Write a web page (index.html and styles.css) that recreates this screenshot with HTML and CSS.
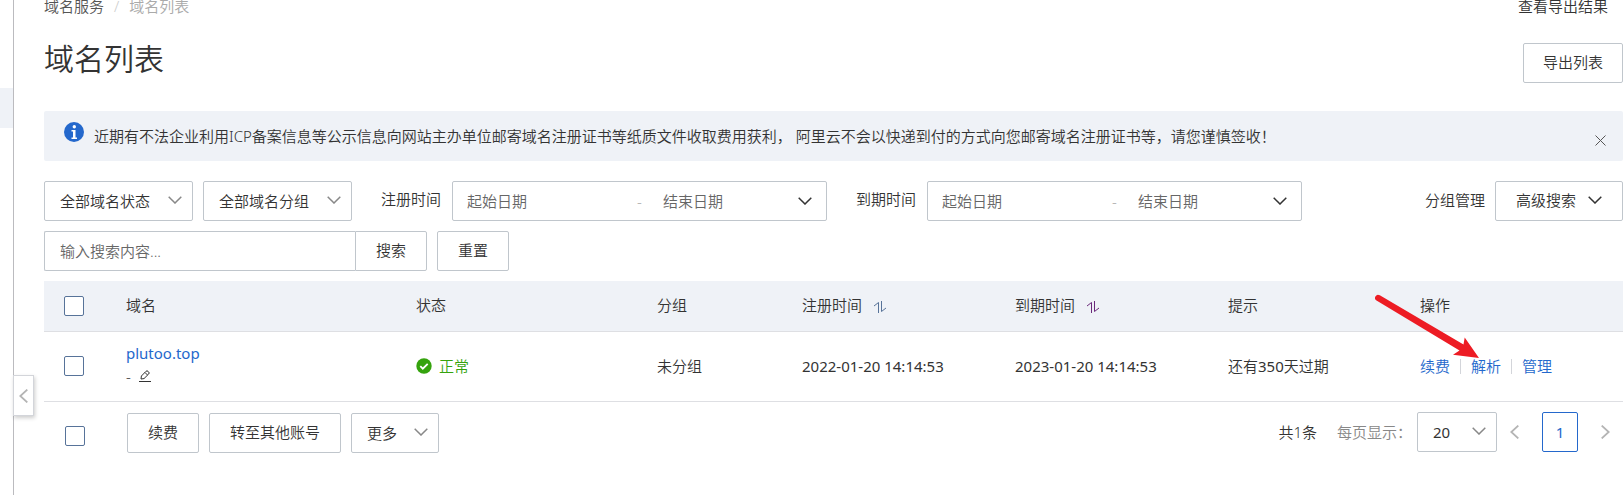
FILE: index.html
```html
<!DOCTYPE html>
<html lang="zh-CN">
<head>
<meta charset="utf-8">
<title>域名列表</title>
<meta name="viewport" content="width=device-width, initial-scale=1">
<link rel="stylesheet" href="styles.css">
</head>
<body>
<svg class="sprite" aria-hidden="true">
  <symbol id="chevron" viewBox="0 0 14 8"><path d="M.7.7 7 7 13.3.7" fill="none" stroke="currentColor" stroke-width="1.5"/></symbol>
  <symbol id="prev" viewBox="0 0 9 14"><path d="M8.3.6 1.3 7l7 6.4" fill="none" stroke="currentColor" stroke-width="1.8"/></symbol>
  <symbol id="next" viewBox="0 0 9 14"><path d="M.7.6 7.7 7l-7 6.4" fill="none" stroke="currentColor" stroke-width="1.8"/></symbol>
  <symbol id="sort" viewBox="0 0 12 12"><path d="M0 5 4.500 1.500V12M7.500 0v10.500L12 7" fill="none" stroke="currentColor" stroke-width="1"/></symbol>
</svg>
<div class="layout">
  <aside class="sidebar">
    <div class="sidebar-active"></div>
    <button class="collapse" type="button" aria-label="收起侧栏"><svg class="icon-collapse"><use href="#prev"/></svg></button>
  </aside>
  <main class="main">
    <div class="topline">
      <nav class="breadcrumb"><a href="#">域名服务</a><span class="slash">/</span><span class="current">域名列表</span></nav>
      <a class="plain-link" href="#">查看导出结果</a>
    </div>
    <header class="heading">
      <h1>域名列表</h1>
      <button class="btn" type="button">导出列表</button>
    </header>
    <div class="notice">
      <svg class="icon-info" viewBox="0 0 20 20"><circle cx="10" cy="10" r="10" fill="#2468cc"/><circle cx="10.300" cy="4.700" r="1.700" fill="#fff"/><path d="M7.500 8h4v7.500H13V17H7.500v-1.500H9v-6H7.500z" fill="#fff"/></svg>
      <p>近期有不法企业利用ICP备案信息等公示信息向网站主办单位邮寄域名注册证书等纸质文件收取费用获利， 阿里云不会以快递到付的方式向您邮寄域名注册证书等，请您谨慎签收！</p>
      <button class="close" type="button" aria-label="关闭"><svg viewBox="0 0 11 11"><path d="m.5.5 10 10m0-10-10 10" stroke="currentColor" stroke-width="1"/></svg></button>
    </div>
    <form class="filters">
      <div class="filter-row">
        <div class="select"><select aria-label="域名状态"><option>全部域名状态</option></select><svg class="chevron"><use href="#chevron"/></svg></div>
        <div class="select"><select aria-label="域名分组"><option>全部域名分组</option></select><svg class="chevron"><use href="#chevron"/></svg></div>
        <label class="range-label" for="reg-start">注册时间</label>
        <div class="range"><input class="range-start" id="reg-start" type="text" placeholder="起始日期"><span class="dash">-</span><input type="text" placeholder="结束日期" aria-label="注册时间结束日期"><svg class="chevron"><use href="#chevron"/></svg></div>
        <label class="range-label" for="exp-start">到期时间</label>
        <div class="range"><input class="range-start" id="exp-start" type="text" placeholder="起始日期"><span class="dash">-</span><input type="text" placeholder="结束日期" aria-label="到期时间结束日期"><svg class="chevron"><use href="#chevron"/></svg></div>
        <a class="plain-link groups" href="#">分组管理</a>
        <button class="btn" type="button">高级搜索<svg class="chevron"><use href="#chevron"/></svg></button>
      </div>
      <div class="filter-row">
        <div class="search"><input type="text" placeholder="输入搜索内容..." aria-label="搜索内容"><button class="btn" type="button">搜索</button></div>
        <button class="btn" type="button">重置</button>
      </div>
    </form>
    <table class="domains">
      <colgroup><col class="c-check"><col class="c-name"><col class="c-state"><col class="c-group"><col class="c-date"><col class="c-date"><col class="c-tip"><col class="c-ops"></colgroup>
      <thead>
        <tr><th><input type="checkbox" aria-label="全选"></th><th>域名</th><th>状态</th><th>分组</th><th>注册时间<svg class="sort"><use href="#sort"/></svg></th><th>到期时间<svg class="sort sort-active"><use href="#sort"/></svg></th><th>提示</th><th>操作</th></tr>
      </thead>
      <tbody>
        <tr>
          <td><input type="checkbox" aria-label="选择 plutoo.top"></td>
          <td class="name-cell"><a class="name" href="#">plutoo.top</a><div class="remark">-<button class="edit" type="button" aria-label="编辑备注"><svg viewBox="0 0 12 12"><path d="M0 11.500h12" stroke="currentColor"/><path d="m2 9 .4-3L7 1.300q1-1 2 0l.7.7q1 1 0 2L5 8.600zM6 2.500 8.500 5" fill="none" stroke="currentColor"/></svg></button></div></td>
          <td><span class="ok"><svg viewBox="0 0 16 16"><circle cx="8" cy="8" r="7.700" fill="#35a30d"/><path d="m4.300 8.200 2.500 2.500 4.900-4.900" fill="none" stroke="#fff" stroke-width="1.800"/></svg>正常</span></td>
          <td>未分组</td>
          <td class="date">2022-01-20 14:14:53</td>
          <td class="date">2023-01-20 14:14:53</td>
          <td>还有<span class="num">350</span>天过期</td>
          <td class="ops-cell">
            <div class="ops"><a href="#">续费</a><a href="#">解析</a><a href="#">管理</a></div>
            <svg class="pointer" viewBox="0 0 106 65" aria-hidden="true"><path d="M5.800 1.300 89.500 50.500 90.700 43.500 105 64 79 60.700 85.500 56.500 2.500 6.500A3 3 0 0 1 5.800 1.300z" fill="#ed1c24"/></svg>
          </td>
        </tr>
      </tbody>
    </table>
    <footer class="footer">
      <input type="checkbox" aria-label="全选">
      <div class="actions">
        <button class="btn" type="button">续费</button>
        <button class="btn" type="button">转至其他账号</button>
        <div class="select select-more"><select aria-label="更多操作"><option>更多</option></select><svg class="chevron"><use href="#chevron"/></svg></div>
      </div>
      <div class="pager">
        <span>共1条</span>
        <label class="size-label" for="page-size">每页显示：</label>
        <div class="select select-size"><select id="page-size"><option>20</option></select><svg class="chevron"><use href="#chevron"/></svg></div>
        <button class="step" type="button" aria-label="上一页"><svg><use href="#prev"/></svg></button>
        <button class="page" type="button">1</button>
        <button class="step" type="button" aria-label="下一页"><svg><use href="#next"/></svg></button>
      </div>
    </footer>
  </main>
</div>
</body>
</html>
```
FILE: styles.css
```css
* { box-sizing: border-box; }

body {
  margin: 0;
  background: #fff;
  color: #333;
  font: 350 15px/20px "Noto Sans", "Noto Sans CJK SC", sans-serif;
}

button, input, select { font: inherit; color: inherit; }
button { cursor: pointer; }
a { color: #2468cc; text-decoration: none; }
svg { display: block; flex: none; }
.sprite { position: absolute; width: 0; height: 0; }

.layout { display: flex; min-height: 100vh; }

.sidebar {
  position: relative;
  flex: none;
  width: 14px;
  padding-top: 88px;
  border-right: 1px solid #bbbbbf;
}
.sidebar-active { height: 40px; background: #eff2f7; }
.collapse {
  position: absolute;
  top: 375px;
  left: 13px;
  display: grid;
  place-items: center;
  width: 21px;
  height: 41px;
  padding: 0;
  border: 1px solid #d3d5da;
  background: #fff;
  box-shadow: 1px 2px 4px rgba(0, 0, 0, .2);
  color: #b4b4b4;
}
.icon-collapse { width: 9px; height: 14px; }

.main { flex: 1; min-width: 0; padding: 0 1px 0 30px; }

.topline { display: flex; justify-content: space-between; height: 12px; line-height: 12px; padding-right: 15px; }
.breadcrumb { display: flex; gap: 10px; }
.breadcrumb a { color: #555; }
.slash { color: #ccc; }
.current { color: #aaa; }
.plain-link { color: #333; }

.heading { display: flex; justify-content: space-between; align-items: flex-start; padding: 31px 0 28px; }
.heading h1 { margin: 0; font-size: 30px; line-height: 32px; font-weight: 350; }

.btn {
  display: flex;
  align-items: center;
  gap: 12px;
  height: 40px;
  padding: 0 20px 2px;
  border: 1px solid #c0c6cc;
  border-radius: 2px;
  background: #fff;
  white-space: nowrap;
}
.heading .btn { padding: 0 19px 2px; }

.notice { display: flex; gap: 10px; min-height: 50px; padding: 11px 17px 9px 20px; border-radius: 2px; background: #eff2f7; }
.notice p { flex: 1; margin: 0; padding-top: 4px; }
.icon-info { width: 20px; height: 20px; }
.close { align-self: center; padding: 6px 0 0; border: 0; background: none; color: #555; }
.close svg { width: 11px; height: 11px; }

.filters { display: grid; gap: 10px; padding: 20px 0 10px; }
.filter-row { display: flex; align-items: center; gap: 10px; }

.chevron { width: 14px; height: 8px; }
.select { position: relative; flex: none; width: 149px; color: #333; }
.select select {
  appearance: none;
  width: 100%;
  height: 40px;
  padding: 0 34px 1px 15px;
  border: 1px solid #c0c6cc;
  border-radius: 2px;
  background: #fff;
}
.select .chevron { position: absolute; top: 15px; right: 11px; color: #888; pointer-events: none; }

.range-label { padding: 0 1px 4px 19px; white-space: nowrap; }
.range {
  display: flex;
  align-items: center;
  flex: 0 1 375px;
  min-width: 0;
  height: 40px;
  padding: 0 14px;
  border: 1px solid #c0c6cc;
  border-radius: 2px;
}
.range input { flex: 1; min-width: 0; padding: 0; border: 0; background: none; outline: 0; }
.range .range-start { flex: 0 1 170px; }
.dash { width: 26px; color: #aaa; }
input::placeholder { color: #666; opacity: 1; }
.groups { margin-left: auto; padding-bottom: 2px; }

.search { display: flex; width: 383px; }
.search input { flex: 1; min-width: 0; height: 40px; padding: 0 15px; border: 1px solid #c0c6cc; border-right: 0; border-radius: 2px 0 0 2px; }
.search .btn { border-radius: 0 2px 2px 0; }

input[type="checkbox"] {
  appearance: none;
  display: block;
  flex: none;
  width: 20px;
  height: 20px;
  margin: 0;
  border: 1px solid #577399;
  border-radius: 2px;
  background: #fff;
}

.domains { width: 100%; table-layout: fixed; border-collapse: separate; border-spacing: 0; }
.c-check { width: 62px; }
.c-name { width: 290px; }
.c-state { width: 241px; }
.c-group { width: 145px; }
.c-date { width: 213px; }
.c-tip { width: 192px; }
.c-ops { width: 223px; }
.domains th, .domains td { padding: 0 0 2px 20px; border-bottom: 1px solid #dedfe3; text-align: left; font-weight: 350; white-space: nowrap; }
.domains th { height: 51px; background: #eff2f7; }
.domains th:first-child { padding-bottom: 0; }
.domains td { height: 70px; }
.domains .date, .name, .num, .select-size select, .page { font-weight: 400; }
.sort { display: inline-block; width: 12px; height: 12px; margin-left: 12px; vertical-align: -2px; color: #577399; }
.sort-active { color: #6b2a7b; }
.domains .name-cell { padding-bottom: 6px; }
.name { display: block; line-height: 24px; }
.remark { display: flex; align-items: center; gap: 8px; padding-top: 1px; }
.edit { padding: 0; border: 0; background: none; }
.edit svg { width: 12px; height: 12px; }
.ok { display: flex; align-items: center; gap: 7px; color: #35a30d; }
.ok svg { width: 16px; height: 16px; }
.ops { display: flex; align-items: center; }
.ops a + a { margin-left: 10px; padding-left: 10px; border-left: 1px solid #d3d5da; }
.ops a { line-height: 15px; }
.domains .ops-cell { position: relative; padding-bottom: 0; }
.pointer { position: absolute; top: -38px; left: -26px; width: 106px; height: 65px; pointer-events: none; }

.footer { display: flex; align-items: center; padding: 10px 0 0 21px; }
.footer > input[type="checkbox"] { margin-top: 6px; }
.actions { display: flex; gap: 10px; margin-left: 42px; }
.select-more { width: 88px; }
.pager { display: flex; align-items: center; margin-left: auto; padding-bottom: 2px; }
.size-label { margin-left: 20px; color: #888; }
.select-size { width: 80px; margin-left: 5px; }
.step { padding: 13px; border: 0; background: none; color: #b4b4b4; }
.step svg { width: 9px; height: 14px; }
.page { width: 36px; height: 40px; margin: 0 10px; padding: 0; border: 1px solid #2468cc; border-radius: 2px; background: #fff; color: #2468cc; }
```
